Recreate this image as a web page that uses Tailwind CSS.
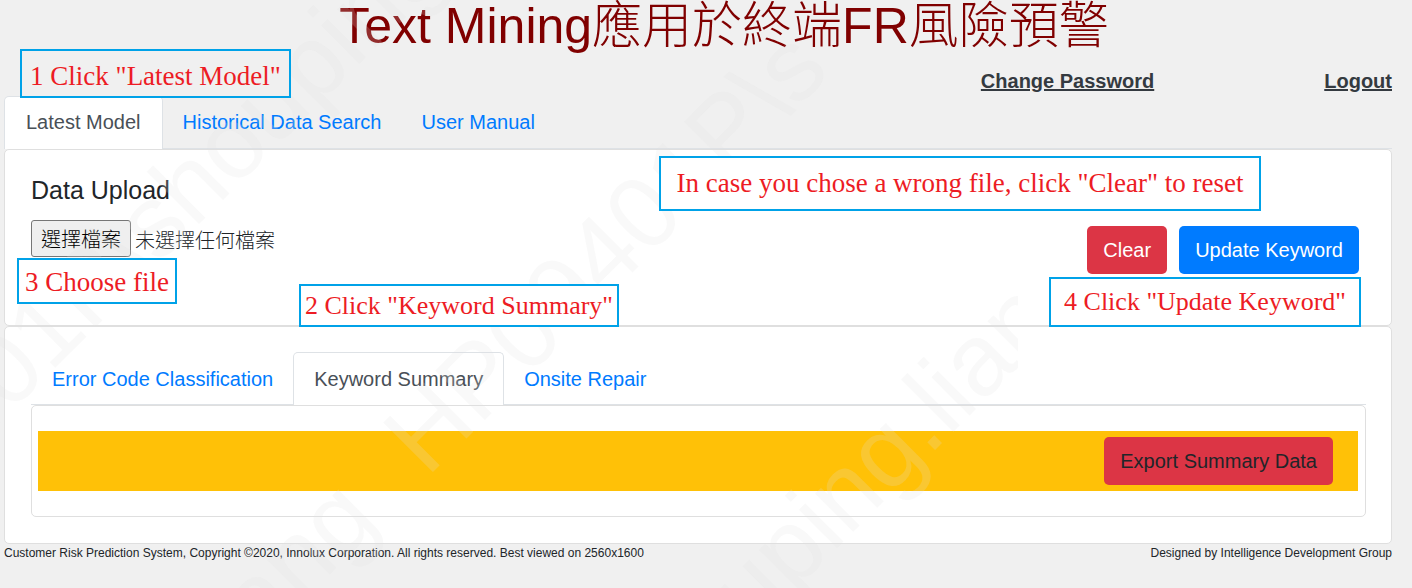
<!DOCTYPE html>
<html lang="zh-Hant">
<head>
<meta charset="utf-8">
<title>Text Mining</title>
<script src="https://cdn.jsdelivr.net/npm/@tailwindcss/browser@4"></script>
</head>
<body class="relative min-h-screen overflow-x-hidden bg-[#f0f0f0] pl-1 pr-5 font-['Liberation_Sans','Noto_Sans_CJK_TC',sans-serif] text-xl text-[#212529]">
  <header>
    <h1 class="pl-[52px] text-center text-[50px] leading-[52px] font-light text-[#800000]">Text Mining應用於終端FR風險預警</h1>
    <div class="flex justify-end gap-[170px] pt-3.5 leading-[30px] font-bold text-[#343a40]">
      <a href="#" class="underline">Change Password</a>
      <a href="#" class="underline">Logout</a>
    </div>
  </header>

  <nav class="flex border-b border-[#dee2e6] leading-[30px]">
    <a href="#" class="-mb-px rounded-t-[5px] border border-b-0 border-[#dee2e6] bg-white px-[21px] pt-[10px] pb-3 text-[#495057]">Latest Model</a>
    <a href="#" class="px-5 pt-[11px] pb-[10px] text-[#007bff]">Historical Data Search</a>
    <a href="#" class="px-5 pt-[11px] pb-[10px] text-[#007bff]">User Manual</a>
  </nav>

  <main>
    <section class="rounded-[5px] border border-[#dfdfdf] bg-white pt-[25px] pr-8 pb-[51px] pl-[26px]">
      <h2 class="text-[25px] leading-[30px]">Data Upload</h2>
      <div class="mt-[15px] flex items-start justify-between">
        <div class="flex items-center gap-1 font-light">
          <input id="upload" type="file" class="sr-only">
          <label for="upload" class="rounded-[3px] border border-[#767676] bg-[#efefef] px-[9px] pt-1 leading-[31px] text-black">選擇檔案</label>
          <span class="pt-1">未選擇任何檔案</span>
        </div>
        <div class="flex gap-3 pt-1.5 text-white">
          <button type="button" class="h-12 rounded-[5px] bg-[#dc3545] px-4">Clear</button>
          <button type="button" class="h-12 rounded-[5px] bg-[#007bff] px-4">Update Keyword</button>
        </div>
      </div>
    </section>

    <section class="rounded-[5px] border border-[#dfdfdf] bg-white pt-[25px] pr-[25px] pb-[26px] pl-[26px]">
      <nav class="flex border-b border-[#dee2e6] leading-[30px]">
        <a href="#" class="pt-3 pr-5 pb-[10px] pl-[21px] text-[#007bff]">Error Code Classification</a>
        <a href="#" class="-mb-px rounded-t-[5px] border border-b-0 border-[#dee2e6] bg-white px-5 pt-[11px] pb-[11px] text-[#495057]">Keyword Summary</a>
        <a href="#" class="px-5 pt-3 pb-[10px] text-[#007bff]">Onsite Repair</a>
      </nav>
      <div class="rounded-[5px] border border-[#dfdfdf] bg-white py-[25px] pr-[7px] pl-1.5">
        <div class="flex justify-end bg-[#ffc107] py-1.5 pr-[25px]">
          <button type="button" class="h-12 rounded-[5px] bg-[#dc3545] px-4">Export Summary Data</button>
        </div>
      </div>
    </section>
  </main>

  <footer class="flex justify-between text-xs leading-[18px]">
    <span>Customer Risk Prediction System, Copyright ©2020, Innolux Corporation. All rights reserved. Best viewed on 2560x1600</span>
    <span>Designed by Intelligence Development Group</span>
  </footer>

  <!-- user watermark, repeated diagonally -->
  <svg class="pointer-events-none absolute top-0 left-0 h-[588px] w-[1412px]" viewBox="0 0 1412 588" font-family="Liberation Sans, sans-serif" font-size="102" fill="#e0e0e0" fill-opacity="0.2" aria-hidden="true">
    <defs><clipPath id="edge"><rect width="1018" height="588"/></clipPath></defs>
    <g clip-path="url(#edge)">
      <text transform="translate(-211 634) rotate(-45)">HP09401P\shouping</text>
      <text transform="translate(427 478) rotate(-45)">HP09401P\s</text>
      <text transform="translate(381 523) rotate(-45)" text-anchor="end">ang</text>
      <text transform="translate(712 673) rotate(-45)">ouping.lian</text>
    </g>
  </svg>

  <!-- step callouts laid over the page -->
  <div class="font-['Liberation_Serif',serif] text-[27px] whitespace-nowrap text-[#ed1c24]">
    <div class="absolute top-[49px] left-5 flex h-[49px] w-[271px] items-center justify-center border-2 border-[#00a2e8] bg-[#f0f0f0] pt-1.5">1 Click "Latest Model"</div>
    <div class="absolute top-[156px] left-[659px] flex h-[55px] w-[602px] items-center justify-center border-2 border-[#00a2e8] bg-white">In case you chose a wrong file, click "Clear" to reset</div>
    <div class="absolute top-[258px] left-[17px] flex h-[46px] w-[160px] items-center justify-center border-2 border-[#00a2e8] bg-white pt-1">3 Choose file</div>
    <div class="absolute top-[284px] left-[299px] flex h-[43px] w-[320px] items-center justify-center border-2 border-[#00a2e8] bg-white pt-0.5 text-[26px]">2 Click "Keyword Summary"</div>
    <div class="absolute top-[277px] left-[1049px] flex h-[50px] w-[312px] items-center justify-center border-2 border-[#00a2e8] bg-white text-[26px]">4 Click "Update Keyword"</div>
  </div>
</body>
</html>
